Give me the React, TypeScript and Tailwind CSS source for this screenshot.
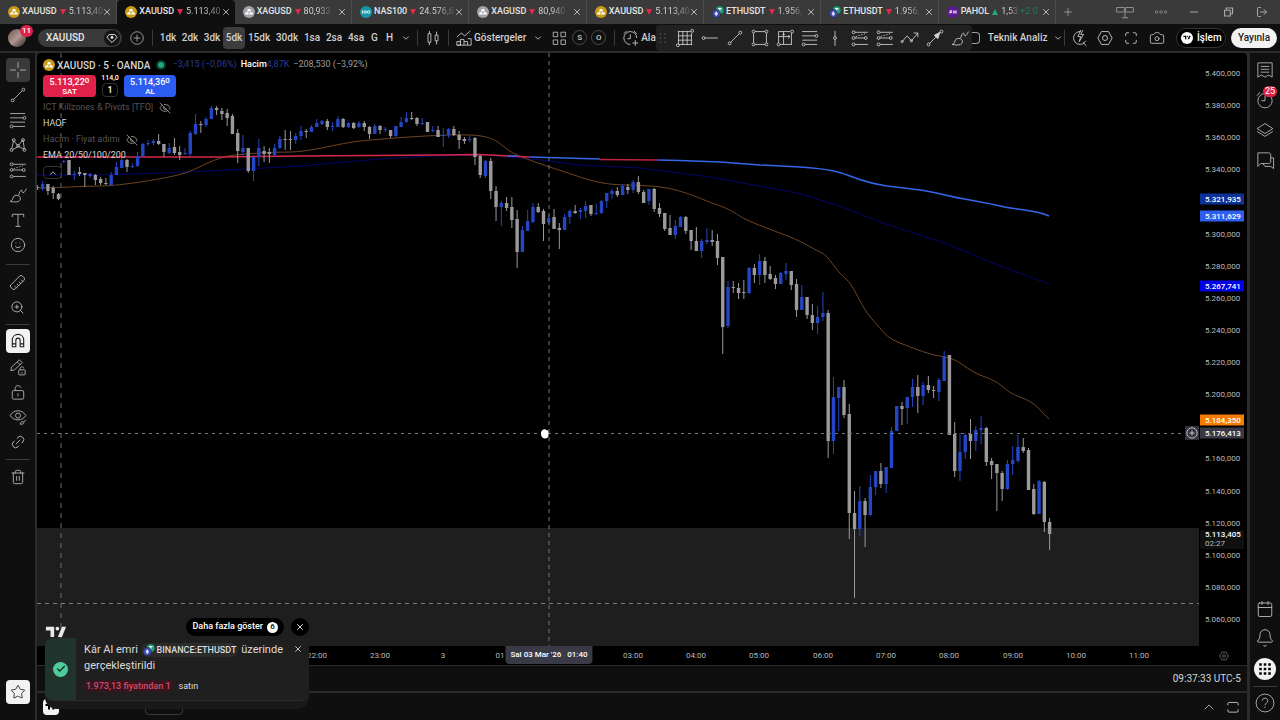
import React from "react";
import {
  Bell,
  Calendar,
  Camera,
  Check,
  ChevronDown,
  ChevronUp,
  EyeOff,
  Link2,
  LogOut,
  Maximize,
  Minus,
  Plus,
  Ruler,
  Smile,
  Star,
  Trash2,
  X,
  ZoomIn,
} from "lucide-react";

type Candle = [up: number, high: number, top: number, bottom: number, low: number];

// one entry per five minute bar, in canvas units
const candles: Candle[] = [
  [0, 185, 187, 188, 190], [1, 181, 184, 189, 191], [0, 184, 184, 191, 195], [0, 186, 188, 193, 199],
  [0, 193, 194, 199, 200], [1, 160, 161, 162, 163], [0, 160, 160, 175, 175], [1, 171, 174, 175, 180],
  [0, 167, 172, 174, 176], [0, 173, 173, 175, 187], [1, 173, 174, 176, 178], [0, 174, 175, 180, 185],
  [0, 177, 179, 183, 185], [0, 178, 183, 184, 185], [1, 172, 175, 185, 186], [1, 162, 167, 175, 175],
  [1, 158, 160, 168, 168], [0, 159, 160, 167, 172], [1, 163, 166, 167, 168], [1, 152, 156, 166, 167],
  [1, 143, 144, 156, 157], [1, 140, 143, 144, 146], [1, 139, 141, 143, 145], [0, 134, 141, 144, 145],
  [0, 144, 144, 152, 157], [1, 143, 148, 153, 154], [0, 138, 147, 153, 155], [0, 146, 152, 155, 160],
  [1, 148, 153, 154, 155], [1, 131, 133, 154, 156], [1, 114, 124, 134, 135], [0, 121, 124, 125, 133],
  [1, 117, 119, 125, 127], [1, 106, 108, 119, 119], [0, 106, 108, 110, 115], [0, 108, 111, 114, 120],
  [0, 109, 113, 118, 126], [0, 114, 116, 134, 134], [0, 129, 133, 151, 163], [1, 135, 148, 152, 156],
  [0, 148, 148, 171, 173], [1, 155, 157, 171, 181], [1, 139, 148, 157, 166], [0, 146, 151, 154, 162],
  [0, 148, 152, 154, 163], [1, 144, 148, 155, 156], [1, 136, 139, 148, 149], [0, 130, 139, 140, 150],
  [0, 131, 139, 140, 150], [1, 133, 136, 140, 144], [1, 126, 131, 136, 140], [0, 129, 131, 132, 138],
  [1, 125, 127, 132, 132], [1, 119, 123, 127, 127], [1, 120, 121, 124, 125], [0, 119, 121, 127, 130],
  [1, 122, 126, 127, 131], [1, 116, 119, 127, 127], [0, 118, 119, 127, 128], [1, 122, 123, 127, 128],
  [0, 122, 123, 128, 129], [1, 121, 123, 127, 128], [0, 121, 123, 127, 131], [0, 126, 127, 134, 139],
  [1, 124, 126, 134, 134], [0, 125, 126, 130, 134], [1, 127, 129, 130, 132], [0, 130, 130, 136, 138],
  [1, 126, 126, 136, 137], [1, 117, 122, 127, 127], [1, 112, 118, 122, 123], [0, 112, 118, 119, 120],
  [0, 117, 118, 124, 126], [1, 118, 123, 124, 125], [0, 122, 122, 132, 132], [1, 126, 130, 131, 132],
  [0, 126, 130, 137, 137], [1, 128, 135, 136, 147], [1, 128, 129, 135, 138], [0, 126, 129, 135, 136],
  [0, 131, 135, 140, 149], [0, 137, 139, 141, 144], [1, 136, 139, 140, 142], [0, 137, 138, 157, 165],
  [0, 155, 156, 175, 178], [1, 160, 161, 176, 178], [0, 158, 161, 191, 199], [0, 186, 191, 207, 221],
  [1, 201, 203, 207, 226], [0, 197, 203, 208, 211], [0, 197, 207, 220, 228], [0, 210, 219, 252, 268],
  [1, 226, 230, 252, 252], [1, 210, 221, 231, 231], [1, 203, 207, 222, 223], [0, 203, 207, 212, 213],
  [0, 209, 211, 224, 241], [1, 215, 218, 222, 225], [0, 209, 217, 229, 229], [0, 223, 228, 230, 249],
  [1, 214, 217, 230, 230], [1, 209, 211, 217, 224], [0, 205, 211, 213, 214], [1, 208, 210, 212, 219],
  [1, 201, 206, 211, 218], [0, 205, 205, 214, 216], [1, 204, 213, 214, 215], [1, 200, 201, 213, 214],
  [1, 193, 193, 201, 208], [1, 189, 191, 194, 199], [0, 187, 191, 195, 197], [1, 184, 186, 195, 195],
  [0, 184, 187, 190, 194], [1, 180, 182, 190, 193], [0, 176, 182, 192, 194], [0, 190, 192, 203, 203],
  [1, 189, 189, 201, 205], [0, 188, 189, 209, 212], [0, 203, 208, 214, 217], [0, 213, 213, 229, 231],
  [0, 215, 228, 235, 235], [1, 220, 226, 235, 239], [1, 216, 217, 227, 227], [0, 216, 217, 231, 234],
  [0, 230, 230, 241, 250], [0, 227, 241, 251, 251], [1, 239, 241, 251, 258], [1, 228, 240, 242, 244],
  [0, 230, 240, 242, 246], [0, 234, 241, 258, 265], [0, 257, 257, 327, 354], [1, 281, 287, 326, 328],
  [0, 281, 287, 288, 293], [0, 283, 288, 293, 299], [0, 280, 292, 293, 299], [1, 267, 268, 293, 294],
  [0, 264, 268, 275, 283], [1, 254, 261, 275, 285], [0, 257, 261, 275, 283], [0, 266, 274, 279, 280],
  [0, 275, 278, 284, 289], [1, 272, 273, 284, 284], [1, 263, 271, 274, 280], [0, 271, 271, 285, 290],
  [0, 279, 284, 310, 317], [1, 285, 297, 310, 310], [0, 297, 297, 315, 319], [0, 304, 315, 323, 330],
  [1, 306, 317, 323, 334], [1, 292, 313, 317, 321], [0, 310, 313, 441, 458], [1, 377, 397, 441, 454],
  [1, 387, 387, 398, 431], [0, 380, 387, 415, 418], [0, 404, 414, 513, 539], [0, 491, 513, 529, 598],
  [1, 486, 501, 529, 536], [0, 498, 501, 515, 547], [1, 475, 487, 515, 516], [1, 471, 471, 487, 495],
  [0, 463, 471, 484, 488], [1, 467, 467, 484, 493], [1, 427, 431, 468, 468], [1, 406, 406, 431, 431],
  [0, 402, 406, 409, 425], [1, 397, 397, 408, 424], [1, 379, 387, 397, 407], [0, 375, 387, 396, 413],
  [1, 382, 385, 396, 405], [0, 376, 385, 390, 393], [0, 386, 390, 391, 398], [1, 378, 380, 392, 401],
  [1, 351, 356, 381, 381], [0, 355, 355, 435, 435], [0, 422, 434, 471, 477], [1, 433, 452, 471, 481],
  [1, 433, 435, 452, 459], [0, 419, 434, 441, 459], [1, 426, 430, 441, 451], [1, 416, 428, 430, 444],
  [0, 427, 428, 462, 466], [0, 458, 461, 465, 479], [0, 464, 464, 473, 511], [0, 471, 473, 489, 501],
  [1, 460, 464, 489, 490], [1, 446, 460, 464, 475], [1, 435, 447, 461, 463], [0, 438, 447, 451, 453],
  [0, 448, 450, 490, 490], [0, 484, 489, 514, 515], [1, 480, 481, 514, 514], [0, 481, 482, 522, 532],
  [0, 518, 522, 534, 550],
];

const LAST_X = 1049.6;
const BAR_STEP = 5.272;

const priceTop = (price: number) => `${(((5400 - price) * 1.606 + 21) / 593) * 100}%`;
const timeLeft = (x: number) => `${((x - 37) / 1210) * 100}%`;

const prices = [
  { price: 5400, label: "5.400,000" },
  { price: 5380, label: "5.380,000" },
  { price: 5360, label: "5.360,000" },
  { price: 5340, label: "5.340,000" },
  { price: 5300, label: "5.300,000" },
  { price: 5280, label: "5.280,000" },
  { price: 5260, label: "5.260,000" },
  { price: 5240, label: "5.240,000" },
  { price: 5220, label: "5.220,000" },
  { price: 5200, label: "5.200,000" },
  { price: 5160, label: "5.160,000" },
  { price: 5140, label: "5.140,000" },
  { price: 5120, label: "5.120,000" },
  { price: 5100, label: "5.100,000" },
  { price: 5080, label: "5.080,000" },
  { price: 5060, label: "5.060,000" },
];

const priceTags = [
  { price: 5321.935, label: "5.321,935", style: "bg-[#0c3299]" },
  { price: 5311.629, label: "5.311,629", style: "bg-[#2f5ff0]" },
  { price: 5267.741, label: "5.267,741", style: "bg-[#0000e6]" },
  { price: 5184.35, label: "5.184,350", style: "bg-[#f57c00]" },
  { price: 5176.413, label: "5.176,413", style: "bg-[#3a3a46]" },
];

const times = [
  { x: 317, label: "22:00" },
  { x: 380, label: "23:00" },
  { x: 443, label: "3" },
  { x: 500, label: "01" },
  { x: 633, label: "03:00" },
  { x: 696, label: "04:00" },
  { x: 759, label: "05:00" },
  { x: 823, label: "06:00" },
  { x: 886, label: "07:00" },
  { x: 949, label: "08:00" },
  { x: 1013, label: "09:00" },
  { x: 1076, label: "10:00" },
  { x: 1139, label: "11:00" },
];

const tabs = [
  { coin: "gold", name: "XAUUSD", price: "5.113,40" },
  { coin: "gold", name: "XAUUSD", price: "5.113,40", active: true },
  { coin: "silver", name: "XAGUSD", price: "80,933" },
  { coin: "nas", name: "NAS100", price: "24.576,6" },
  { coin: "silver", name: "XAGUSD", price: "80,940" },
  { coin: "gold", name: "XAUUSD", price: "5.113,40" },
  { coin: "eth", name: "ETHUSDT", price: "1.956," },
  { coin: "eth", name: "ETHUSDT", price: "1.956," },
  { coin: "ph", name: "PAHOL", price: "1,53", change: "+2.0" },
];

const Coin = ({ kind }: { kind: string }) => {
  if (kind === "eth")
    return (
      <svg viewBox="0 0 14 14" className="size-3 shrink-0">
        <circle cx="9" cy="4.8" r="4.6" fill="#1ba27a" />
        <path d="M7 3h4M9 3v5" stroke="#fff" strokeWidth="1.3" />
        <circle cx="5" cy="9" r="4.8" fill="#3b4ba8" stroke="#222" strokeWidth=".6" />
        <path d="M5 5.8 7 9 5 12 3 9Z" fill="#dfe5ff" />
      </svg>
    );
  if (kind === "nas" || kind === "ph")
    return (
      <svg viewBox="0 0 14 14" className="size-3 shrink-0">
        <circle cx="7" cy="7" r="7" fill={kind === "nas" ? "#1596a8" : "#5b1a8c"} />
        {kind === "nas" ? (
          <g fill="none" stroke="#fff">
            <path d="M2.8 5v4" />
            <circle cx="6" cy="7" r="1.5" />
            <circle cx="10" cy="7" r="1.5" />
          </g>
        ) : (
          <path d="M3.5 9V5.5h2v2h-2M8 5v4M8 7h2.5M10.5 5v4" fill="none" stroke="#fff" />
        )}
      </svg>
    );
  return (
    <svg viewBox="0 0 14 14" className="size-3 shrink-0">
      <circle cx="7" cy="7" r="7" fill={kind === "gold" ? "#c99a15" : "#a3a3a8"} />
      <path d="M5.6 3.6h2.8l1 2.8H4.6ZM3.1 7.2h3l.8 2.8H2.2ZM7.9 7.2h3l.9 2.8H7.1Z" fill="#fff" />
    </svg>
  );
};

const Icon = ({ children, className = "size-5" }: { children: React.ReactNode; className?: string }) => (
  <svg viewBox="0 0 28 28" fill="none" stroke="currentColor" strokeWidth="1.2" className={`shrink-0 ${className}`}>
    {children}
  </svg>
);

const TrendLine = () => (
  <Icon>
    <path d="m8 20 12-12" />
    <circle cx="6.5" cy="21.5" r="2" />
    <circle cx="21.5" cy="6.5" r="2" />
  </Icon>
);

const Fib = () => (
  <Icon>
    <path d="M3 5h21M3 11h18M3 17h21M7 23h17" />
    <circle cx="23" cy="11" r="2" />
    <circle cx="5" cy="23" r="2" />
  </Icon>
);

const Position = () => (
  <Icon>
    <path d="M7 6h18M7 14h13M7 23h18" />
    <path d="m8 12 13-4" strokeDasharray="2 2" />
    <circle cx="5" cy="6" r="2" />
    <circle cx="5" cy="14" r="2" />
    <circle cx="22" cy="14" r="2" />
    <circle cx="5" cy="23" r="2" />
  </Icon>
);

const Brush = () => (
  <Icon>
    <path d="M3 23c4-1 3-4 5-7 2-2 6-2 8 0s2 5-1 7c-3 1-8 1-12 0ZM15 14c1-4 2-6 4-7 1 2 1 3 2 4 2 0 3-3 5-6" />
  </Icon>
);

const Logo = ({ className }: { className: string }) => (
  <svg viewBox="0 0 24 16" fill="currentColor" className={className}>
    <path d="M1 2h9v11H6V6H1Z" />
    <circle cx="13.5" cy="4" r="2" />
    <path d="M18.5 2H23l-4.500 11H14Z" />
  </svg>
);

const drawTools = [
  { label: "Trend çizgisi", icon: <TrendLine /> },
  { label: "Fibonacci", icon: <Fib /> },
  {
    label: "Formasyonlar",
    icon: (
      <Icon>
        <path d="M5 20 8 8l6 7 7-8 2 13-8-4-8 4" />
        <circle cx="5" cy="21" r="2" />
        <circle cx="8" cy="7" r="2" />
        <circle cx="14" cy="15" r="2" />
        <circle cx="21" cy="7" r="2" />
        <circle cx="23" cy="21" r="2" />
      </Icon>
    ),
  },
  { label: "Pozisyonlar", icon: <Position /> },
  { label: "Fırça", icon: <Brush /> },
  {
    label: "Metin",
    icon: (
      <Icon>
        <path d="M6 10V6h16v4M14 6v17M10.500 23h7" />
      </Icon>
    ),
  },
  { label: "Emoji", icon: <Smile className="size-4" strokeWidth={1.3} /> },
];

const editTools = [
  {
    label: "Çizimde kal",
    icon: (
      <Icon>
        <path d="m4 19 1-5L16 4l4 4L9 18ZM13 7l4 4" />
        <rect x="15" y="18" width="9" height="7" rx="1" />
        <path d="M17 18v-2c0-3 5-3 5 0M19.500 21v2" />
      </Icon>
    ),
  },
  {
    label: "Kilitle",
    icon: (
      <Icon>
        <rect x="6" y="12" width="16" height="12" rx="2" />
        <path d="M10 12V9c0-5 7-5 8-1M14 16v4" />
      </Icon>
    ),
  },
  {
    label: "Gizle",
    icon: (
      <Icon>
        <path d="M3 12c5-9 17-9 22 0-5 8-17 8-22 0ZM17 24c1-4 4-4 5-3s-1 4-5 3ZM22 21l3-3" />
        <circle cx="14" cy="12" r="3.500" />
      </Icon>
    ),
  },
  { label: "Bağla", icon: <Link2 className="size-4 -rotate-45" strokeWidth={1.3} /> },
];

const favourites = [
  {
    label: "Izgara",
    icon: (
      <Icon>
        <path d="M4 5h18M4 11h20M4 17h20M5 23h19M5 4v18M11 4v20M17 4v20M23 7v17" />
        <circle cx="24" cy="4" r="2" />
        <circle cx="4" cy="24" r="2" />
      </Icon>
    ),
  },
  {
    label: "Yatay ışın",
    icon: (
      <Icon>
        <path d="M7 14h18" />
        <circle cx="5" cy="14" r="2" />
      </Icon>
    ),
  },
  { label: "Trend", icon: <TrendLine /> },
  {
    label: "Dikdörtgen",
    icon: (
      <Icon>
        <path d="M7 5h14M7 23h14M5 7v14M23 7v14" />
        <circle cx="5" cy="5" r="2" />
        <circle cx="23" cy="5" r="2" />
        <circle cx="5" cy="23" r="2" />
        <circle cx="23" cy="23" r="2" />
      </Icon>
    ),
  },
  {
    label: "Fiyat ve tarih",
    icon: (
      <Icon>
        <path d="M5 5h16M5 5v16M7 23h17M23 7v16M12 5v18M5 12h16M12 8l-2 2M12 8l2 2M18 10l3 2-3 3" />
        <circle cx="24" cy="5" r="2" />
        <circle cx="5" cy="23" r="2" />
      </Icon>
    ),
  },
  { label: "Seviyeler", icon: <Fib /> },
  {
    label: "Dikey",
    icon: (
      <Icon>
        <path d="M14 4v8M14 16v9" />
        <circle cx="14" cy="14" r="2" />
      </Icon>
    ),
  },
  { label: "Uzun pozisyon", icon: <Position /> },
  { label: "Kısa pozisyon", icon: <Position /> },
  {
    label: "Yol",
    icon: (
      <Icon>
        <path d="m3 19 7-8 6 7 9-11M19 7h6v6" />
        <circle cx="3" cy="19" r="1.500" />
        <circle cx="16" cy="18" r="1.500" />
      </Icon>
    ),
  },
  {
    label: "Ok",
    icon: (
      <Icon>
        <path d="m6 22 12-12" />
        <path d="m13 10 8-4-3 9Z" fill="currentColor" />
        <circle cx="5" cy="23" r="2" />
        <circle cx="23" cy="5" r="2" />
      </Icon>
    ),
  },
  { label: "Fırça", icon: <Brush /> },
];

const intervals = ["1dk", "2dk", "3dk", "5dk", "15dk", "30dk", "1sa", "2sa", "4sa", "G", "H"];

const Hexagon = ({ className }: { className?: string }) => (
  <Icon className={className}>
    <path d="M9 5h10l5 9-5 9H9l-5-9Z" />
    <circle cx="14" cy="14" r="3.500" />
  </Icon>
);

const Separator = () => <div className="h-4 w-px shrink-0 bg-[#3a3a3a]" />;

const TabBar = () => (
  <nav className="flex h-6 items-stretch bg-[#3a3a3a]">
    <div className="grid w-[82.5%] grid-cols-9">
      {tabs.map(({ coin, name, price, active, change }, i) => (
        <div
          key={i}
          className={`flex min-w-0 items-center pl-2 pr-1 text-[9px] ${active ? "rounded-t bg-[#0f0f0f]" : "border-r border-[#4c4c4c]"}`}
        >
          <a href="#" className="flex min-w-0 flex-1 items-center gap-0.5">
            <Coin kind={coin} />
            <span className="font-medium text-[#e4e4e4]">{name}</span>
            <svg viewBox="0 0 8 8" className={`mx-px size-1.5 shrink-0 ${change ? "text-[#22ab83]" : "text-[#e0284a]"}`}>
              <path d={change ? "M4 0 8 8H0Z" : "M0 0h8L4 8Z"} fill="currentColor" />
            </svg>
            <span className="whitespace-nowrap bg-linear-to-r from-[#dcdcdc] from-50% to-[#555] bg-clip-text text-transparent">
              {price}
            </span>
            {change && <span className="text-[#22735d]">{change}</span>}
          </a>
          <button aria-label="Sekmeyi kapat">
            <X className="size-[10px] text-[#d0d0d0]" />
          </button>
        </div>
      ))}
    </div>
    <div className="flex flex-1 items-center text-[#a8a8a8]">
      <button aria-label="Yeni sekme" className="pl-1.5">
        <Plus className="size-3" strokeWidth={1.5} />
      </button>
      <div className="ml-auto flex items-center gap-5 pr-3">
        <Icon className="size-[18px]">
          <path d="M1 7h12v7H1ZM15 7h12v7H15ZM14 14v9M9 23h10" />
        </Icon>
        <Icon className="size-3.5">
          <circle cx="5" cy="14" r="2.500" />
          <circle cx="14" cy="14" r="2.500" />
          <circle cx="23" cy="14" r="2.500" />
        </Icon>
        <Minus className="size-3" />
        <Icon className="size-4">
          <path d="M8 11h10v10H8ZM11 11V7h11v10h-4" strokeWidth="2" />
        </Icon>
        <LogOut className="size-3" />
      </div>
    </div>
  </nav>
);

const TopToolbar = () => (
  <header className="flex h-[27px] items-center text-[10px] font-medium text-[#d0d0d0]">
    <div className="relative ml-2 size-[18px] shrink-0 rounded-full bg-linear-to-br from-[#6b5550] via-[#b19791] to-[#332725]">
      <span className="absolute -top-1 left-3 flex h-3 min-w-3 items-center justify-center rounded-full bg-[#dc2348] px-0.5 text-[8px] text-white">
        11
      </span>
    </div>
    <button className="ml-3 flex h-[18px] w-[84px] shrink-0 items-center justify-between rounded-full bg-[#3a3a3a] pl-2 pr-0.5 text-[#ebebeb]">
      XAUUSD
      <span className="rounded-full bg-[#141414]">
        <Icon className="size-4">
          <path d="M9 8h10l4 5-9 9-9-9Z" strokeWidth="1.600" />
          <circle cx="14" cy="13" r="2" fill="currentColor" />
        </Icon>
      </span>
    </button>
    <button aria-label="Sembol ekle" className="mx-[7px]">
      <Icon className="size-4">
        <circle cx="14" cy="14" r="11" />
        <path d="M14 8v12M8 14h12" />
      </Icon>
    </button>
    <Separator />
    <div className="ml-1 flex shrink-0 items-center">
      {intervals.map((label) => (
        <button
          key={label}
          className={`h-[22px] rounded ${label.length > 3 ? "w-[28px]" : label.length > 1 ? "w-[22px]" : "w-[15px]"} ${label === "5dk" ? "bg-[#3d3d3d]" : ""}`}
        >
          {label}
        </button>
      ))}
      <ChevronDown className="ml-1 mr-1.5 size-2.5" />
    </div>
    <Separator />
    <button aria-label="Mum grafiği" className="mx-[5px]">
      <Icon>
        <path d="M7 8h4v12H7ZM9 4v4M9 20v4M17 10h4v8h-4ZM19 5v5M19 18v5" />
      </Icon>
    </button>
    <Separator />
    <button className="ml-[5px] flex shrink-0 items-center">
      <Icon>
        <path d="M4 24v-5h5v5ZM9 24v-8h5v8M14 19h5v5M19 15h5v9H4M4 13l6-6 5 4 8-7" />
      </Icon>
      Göstergeler
    </button>
    <ChevronDown className="mx-[7px] size-2.5 shrink-0" />
    <div className="flex shrink-0 items-center gap-1">
      <Icon className="size-[18px]">
        <path d="M5 5h7v7H5ZM17 5h7v7h-7ZM5 17h7v7H5ZM17 17h7v7h-7Z" />
      </Icon>
      <button className="size-[15px] rounded-full border border-[#4a4a4a] text-[8px] leading-3">S</button>
      <button className="size-[15px] rounded-full border border-[#4a4a4a] text-[8px] leading-3">O</button>
    </div>
    <div className="ml-2 flex shrink-0 items-center">
      <Separator />
      <button className="ml-1.5 flex items-center">
        <Icon>
          <path d="M22 14a9 9 0 1 0-9 9M13 9v6H9M4 8l4-4M18 4l4 4M20 17v8M16 21h8" />
        </Icon>
        Ala
      </button>
    </div>
    <div className="flex h-[26px] shrink-0 items-center gap-[5px] rounded bg-[#212121] pr-0.5">
      <Icon className="size-3.5">
        <path d="M9 5v3M9 13v3M9 21v3M18 5v3M18 13v3M18 21v3" strokeWidth="2.500" stroke="#555" />
      </Icon>
      {favourites.map(({ label, icon }) => (
        <button key={label} aria-label={label}>
          {icon}
        </button>
      ))}
    </div>
    <div className="flex flex-1 items-center">
      <div className="mr-2 h-3 w-2 shrink-0 rounded-r-sm border border-l-0 border-[#a0a0a0]" />
      <button className="flex items-center gap-1.5 whitespace-nowrap">
        Teknik Analiz
        <ChevronDown className="size-2.5" />
      </button>
    </div>
    <div className="flex shrink-0 items-center gap-[5px] pr-[3px]">
      <Separator />
      <Icon>
        <path d="M15 5a9 9 0 1 0 7 13M18 20l5 5M15 3l-4 9h4l-2 7 6-10h-4l3-6" />
      </Icon>
      <Hexagon />
      <Maximize className="mx-1 size-3.5" strokeWidth={1.4} />
      <Camera className="mx-0.5 size-4" strokeWidth={1.2} />
      <button className="ml-1 flex h-5 w-[50px] items-center gap-1 rounded-full border border-[#333] bg-black pl-1 text-white">
        <span className="flex size-3 shrink-0 items-center justify-center rounded-full bg-white text-black">
          <Logo className="w-2" />
        </span>
        İşlem
      </button>
      <button className="h-5 w-[46px] rounded-full bg-[#f2f2f2] text-[#1c1c1c]">Yayınla</button>
    </div>
  </header>
);

const LeftToolbar = () => (
  <aside className="flex w-[35px] shrink-0 flex-col items-center gap-px bg-[#0f0f0f] pb-4 pt-[5px] text-[#bcbcbc]">
    <button aria-label="İmleç" className="flex size-6 items-center justify-center rounded bg-[#3a3a3a]">
      <Icon>
        <path d="M14 3v8M14 17v8M3 14h8M17 14h8" />
      </Icon>
    </button>
    {drawTools.map(({ label, icon }) => (
      <button key={label} aria-label={label} className="flex size-6 items-center justify-center">
        {icon}
      </button>
    ))}
    <div className="mb-1 mt-1.5 h-px w-6 bg-[#3a3a3a]" />
    <button aria-label="Ölçü" className="flex size-6 items-center justify-center">
      <Ruler className="size-[17px] rotate-90" strokeWidth={1.3} />
    </button>
    <button aria-label="Yakınlaştır" className="flex size-6 items-center justify-center">
      <ZoomIn className="size-[15px]" strokeWidth={1.4} />
    </button>
    <div className="mb-0.5 mt-1 h-px w-6 bg-[#3a3a3a]" />
    <button aria-label="Mıknatıs" className="my-px flex size-6 items-center justify-center rounded bg-[#f2f2f2] text-[#1c1c1c]">
      <Icon>
        <path d="M6 22v-9c0-11 16-11 16 0v9h-5v-9c0-4-6-4-6 0v9ZM6 18h5M17 18h5" strokeWidth="1.500" />
      </Icon>
    </button>
    {editTools.map(({ label, icon }) => (
      <button key={label} aria-label={label} className="flex size-6 items-center justify-center">
        {icon}
      </button>
    ))}
    <div className="my-1 h-px w-6 bg-[#3a3a3a]" />
    <button aria-label="Sil" className="flex size-6 items-center justify-center">
      <Trash2 className="size-4" strokeWidth={1.3} />
    </button>
    <button aria-label="Favoriler" className="mt-auto flex size-6 items-center justify-center rounded bg-[#f2f2f2] text-[#1c1c1c]">
      <Star className="size-4" strokeWidth={1.25} />
    </button>
  </aside>
);

const RightToolbar = () => (
  <aside className="flex w-[30px] shrink-0 flex-col items-center gap-2.5 bg-[#0f0f0f] pb-[7px] pt-[7px] text-[#bcbcbc]">
    <button aria-label="İzleme listesi">
      <Icon>
        <path d="M4 4h20v20l-5-3-5 3-5-3-5 3ZM8 9h12M8 13h12M8 17h12" />
      </Icon>
    </button>
    <button aria-label="Alarmlar" className="relative">
      <Icon>
        <circle cx="14" cy="15" r="10" />
        <path d="M14 8v7H9M3 8l4-5" />
      </Icon>
      <span className="absolute -top-1 left-2 rounded-full bg-[#dc2348] px-0.5 text-[9px] leading-[11px] text-white">25</span>
    </button>
    <button aria-label="Katmanlar">
      <Icon>
        <path d="m14 5 11 7-11 7-11-7ZM3 16l11 7 11-7" />
      </Icon>
    </button>
    <button aria-label="Sohbet">
      <Icon>
        <path d="M4 4h15c2 0 3 1 3 3v10c0 1-1 2-3 2H8l-4 4ZM22 11h4v15l-4-3h-8l-3-4" />
      </Icon>
    </button>
    <button aria-label="Takvim" className="mt-auto">
      <Calendar className="size-[18px]" strokeWidth={1.2} />
    </button>
    <button aria-label="Bildirimler">
      <Bell className="size-5" strokeWidth={1.1} />
    </button>
    <button aria-label="Uygulamalar" className="rounded-full bg-[#f2f2f2] p-0.5 text-black">
      <Icon className="size-[18px]">
        <path d="M5 7h4M12 7h4M19 7h4M5 14h4M12 14h4M19 14h4M5 21h4M12 21h4M19 21h4" strokeWidth="4" />
      </Icon>
    </button>
    <div className="-my-1 h-px w-6 bg-[#3a3a3a]" />
    <button aria-label="Yardım">
      <Icon>
        <circle cx="14" cy="14" r="12.500" />
        <path d="M10 11c0-5 8-5 8 0 0 3-4 3-4 6M14 19v2" />
      </Icon>
    </button>
  </aside>
);

const Plot = () => (
  <svg viewBox="37 53 1162 593" preserveAspectRatio="none" className="absolute inset-0 h-full w-full" fill="none">
    <rect x="37" y="528" width="1162" height="118" fill="#1e1e1e" />
    <path d="M37 603.500H1199" stroke="#808080" strokeDasharray="4 4" />
    <path d="M61 53V646" stroke="#6a6a78" strokeDasharray="5 5" />
    <path
      d="M37 175 100 175 190 172 300 166 380 159 430 156 490 155 540 160 580 165 640 168 710 177 797 193 843 207 880 222 950 245 1000 266 1049 284"
      stroke="#05056c"
    />
    <path
      d="M37 188C60 188 80 186 100 186S170 178 185 173 215 157 235 155 270 152 290 152 340 143 360 141 440 134 470 135 500 147 515 154 550 167 580 177 620 184 650 186 695 197 715 204 735 214 745 219 775 231 790 237 815 250 822 253 835 270 845 278 860 306 872 319 885 337 900 343 930 355 945 357 965 370 985 377 1003 391 1020 397 1040 411 1049 419"
      stroke="#6e4422"
    />
    <path d="M37 157 220 157 300 156 440 155 480 154.500 510 156 530 157" stroke="#d62849" strokeWidth="1.500" />
    <path
      d="M508 156 517 156M530 157 600 159M658 160 680 160.500 720 162 760 165 800 167C830 169 840 172 850 176S875 185 895 187 930 191 945 195 985 202 1000 206 1035 209 1049 216"
      stroke="#3566e8"
      strokeWidth="1.500"
    />
    <path d="M600 159.500 658 160" stroke="#c02340" strokeWidth="1.500" />
    {candles.map(([up, high, top, bottom, low], i) => {
      const x = LAST_X - (candles.length - 1 - i) * BAR_STEP;
      const color = up ? "#2446c4" : "#9a9a9a";
      return (
        <g key={i} fill={color}>
          <rect x={x - 0.5} y={high} width="1" height={low - high} />
          <rect x={x - 1.7} y={top} width="3.4" height={Math.max(bottom - top, 1)} />
        </g>
      );
    })}
    <path d="M37 433.500H1199" stroke="#777" strokeDasharray="3 4" />
    <path d="M549 53V646" stroke="#777" strokeDasharray="4 4" />
    <path d="M541 433c0-2 1-2 1.500-3 1-1 3-1 4 0 1.500 0 2 1 2 3v2c0 2-1 3.500-3.500 3.500s-3-1.500-4-3.500Z" fill="#fff" />
  </svg>
);

const Legend = () => (
  <div className="absolute left-1.5 top-[5px] flex flex-col items-start text-[9px] text-[#d6d6d6]">
    <div className="flex h-[14px] items-center whitespace-nowrap">
      <Coin kind="gold" />
      <span className="ml-0.5 text-[10px] font-medium">XAUUSD · 5 · OANDA</span>
      <span className="mx-1.5 flex size-2.5 items-center justify-center rounded-full bg-[#0b3a2c]">
        <span className="size-1.5 rounded-full bg-[#20a87c]" />
      </span>
      <span className="text-[#2a3a92]">−3,415 (−0,06%)</span>
      <span className="ml-1 font-medium text-white">Hacim</span>
      <span className="mr-1 text-[#2a3a92]">4,87K</span>
      <span className="text-[#9c9c9c]">−208,530 (−3,92%)</span>
    </div>
    <div className="mt-[3px] flex h-[22px] gap-1.5 text-center font-medium text-white">
      <button className="w-[53px] rounded bg-[#e0224a] leading-[10px]">
        5.113,22<span className="align-top text-[8px] leading-[8px]">0</span>
        <span className="block text-[8px] leading-[9px]">SAT</span>
      </button>
      <div className="flex w-4 flex-col items-center">
        <span className="text-[7px] leading-[7px]">114,0</span>
        <input
          aria-label="Miktar"
          defaultValue="1"
          className="mt-px h-[14px] w-4 rounded border border-[#333] bg-transparent text-center text-[9px]"
        />
      </div>
      <button className="w-[52px] rounded bg-[#2d5cf2] leading-[10px]">
        5.114,36<span className="align-top text-[8px] leading-[8px]">0</span>
        <span className="block text-[8px] leading-[9px]">AL</span>
      </button>
    </div>
    <div className="mt-[3px] flex h-4 items-center gap-1.5 text-[#555]">
      ICT Killzones &amp; Pivots [TFO]
      <EyeOff className="size-3 text-[#b0b0b0]" strokeWidth={1.5} />
    </div>
    <div className="flex h-4 items-center">HAOF</div>
    <div className="flex h-4 items-center gap-1.5 text-[#555]">
      Hacim · Fiyat adımı
      <EyeOff className="size-3 text-[#b0b0b0]" strokeWidth={1.5} />
    </div>
    <div className="flex h-4 items-center">EMA 20/50/100/200</div>
    <button aria-label="Göstergeleri daralt" className="mt-0.5 flex h-[13px] w-[19px] items-center justify-center rounded-sm border border-[#333]">
      <ChevronUp className="size-2.5" />
    </button>
  </div>
);

const PriceAxis = () => (
  <div className="relative w-12 shrink-0 text-[8px] text-[#bababa]">
    {prices.map(({ price, label }) => (
      <span key={price} className="absolute left-1.5 -translate-y-1/2 leading-3" style={{ top: priceTop(price) }}>
        {label}
      </span>
    ))}
    {priceTags.map(({ price, label, style }) => (
      <span
        key={label}
        className={`absolute left-px w-11 -translate-y-1/2 pl-[5px] font-medium leading-[11px] text-white ${style}`}
        style={{ top: priceTop(price) }}
      >
        {label}
      </span>
    ))}
    <div className="absolute left-px w-11 bg-[#0f0f0f] pb-px pl-[5px] leading-[9px]" style={{ top: priceTop(5116) }}>
      <p className="font-medium text-white">5.113,405</p>
      <p>02:27</p>
    </div>
    <button
      aria-label="Alarm ekle"
      className="absolute right-full flex size-3.5 -translate-y-1/2 items-center justify-center bg-[#33333d] text-[#d6d6d6]"
      style={{ top: priceTop(5176.413) }}
    >
      <Icon className="size-3">
        <circle cx="14" cy="14" r="12" strokeWidth="2" />
        <path d="M14 8v12M8 14h12" strokeWidth="2" />
      </Icon>
    </button>
  </div>
);

const TimeAxis = () => (
  <div className="relative h-[19px] shrink-0 bg-black text-[8px] leading-[19px] text-[#bababa]">
    {times.map(({ x, label }) => (
      <span key={x} className="absolute -translate-x-1/2" style={{ left: timeLeft(x) }}>
        {label}
      </span>
    ))}
    <span
      className="absolute top-0 -translate-x-1/2 whitespace-pre rounded-b-sm bg-[#3a3a46] px-[5px] font-medium leading-[18px] text-white"
      style={{ left: timeLeft(549) }}
    >
      {"Sal 03 Mar '26   01:40"}
    </span>
    <button aria-label="Ölçek ayarları" className="absolute right-[17px] top-1 text-[#b0b0b0]">
      <Hexagon className="size-3" />
    </button>
  </div>
);

const Toast = () => (
  <div className="absolute bottom-[11px] left-2 w-[264px]">
    <div className="mb-0.5 flex items-center justify-end gap-[7px] text-[9px] font-medium text-white">
      <button className="flex h-[18px] items-center gap-1 rounded-full bg-black px-1.5">
        Daha fazla göster
        <span className="flex size-[11px] items-center justify-center rounded-full bg-white text-[8px] leading-none text-black">6</span>
      </button>
      <button aria-label="Tümünü kapat" className="flex size-[18px] items-center justify-center rounded-full bg-black">
        <X className="size-2.5" />
      </button>
    </div>
    <div className="rounded-xl bg-[#191919] pb-2">
      <div className="flex overflow-hidden rounded-lg border-b border-[#2b2b2b] bg-[#1f1f1f] text-[11px] text-[#dcdcdc]">
        <div className="flex w-[31px] shrink-0 items-center justify-center bg-[#20332d]">
          <span className="flex size-[15px] items-center justify-center rounded-full bg-[#4fcb9c] text-[#12261f]">
            <Check className="size-2.5" strokeWidth={3} />
          </span>
        </div>
        <div className="flex-1 pb-1.5 pl-2 pt-1">
          <p className="leading-4">
            Kâr Al emri{" "}
            <span className="inline-flex h-3.5 items-center gap-0.5 rounded-full bg-[#2b2b2b] px-0.5 align-middle text-[9px] font-medium">
              <Coin kind="eth" />
              BINANCE:ETHUSDT
            </span>{" "}
            üzerinde gerçekleştirildi
          </p>
          <p className="mt-1 text-[9px] leading-4">
            <span className="mr-1.5 rounded bg-[#35161f] px-0.5 py-px font-medium text-[#d64a68]">1.973,13 fiyatından 1</span>
            satın
          </p>
        </div>
        <button aria-label="Kapat" className="mr-1.5 mt-1.5 self-start">
          <X className="size-2.5" />
        </button>
      </div>
    </div>
  </div>
);

export default function App() {
  return (
    <div className="flex h-screen min-h-[600px] flex-col overflow-hidden bg-[#0f0f0f] font-['Roboto','Noto_Sans',sans-serif]">
      <TabBar />
      <TopToolbar />
      <div className="flex min-h-0 flex-1 border-t-2 border-[#2b2b2b] bg-[#2b2b2b]">
        <LeftToolbar />
        <main className="relative ml-0.5 mr-[3px] flex min-w-0 flex-1 flex-col">
          <section className="flex min-h-0 flex-1 overflow-hidden rounded-t bg-black">
            <div className="relative min-w-0 flex-1">
              <Plot />
              <Legend />
              <Logo className="absolute bottom-1.5 left-2 w-[22px] text-[#e8e8e8]" />
            </div>
            <PriceAxis />
          </section>
          <TimeAxis />
          <div className="flex h-[26px] shrink-0 items-center justify-end border-t border-[#2b2b2b] bg-[#0f0f0f] pr-1.5 text-[10px] text-[#d6d6d6]">
            09:37:33 UTC-5
          </div>
          <footer className="mt-0.5 flex h-[27px] shrink-0 items-center bg-[#0f0f0f] px-1.5 text-[#c4c4c4]">
            <span className="flex size-4 items-center justify-center rounded bg-[#f2f2f2] text-black">
              <Logo className="w-3" />
            </span>
            <div className="ml-[86px] h-4 w-[38px] rounded border border-[#3a3a3a]" />
            <button aria-label="Paneli aç" className="ml-auto mr-2">
              <ChevronUp className="size-4" strokeWidth={1.25} />
            </button>
            <button aria-label="Paneli büyüt">
              <Icon className="size-4">
                <path d="M5 11V8c0-1 1-2 2-2h14c1 0 2 1 2 2v3M5 18v3c0 1 1 2 2 2h14c1 0 2-1 2-2v-3" strokeWidth="1.600" />
              </Icon>
            </button>
          </footer>
          <Toast />
        </main>
        <RightToolbar />
      </div>
    </div>
  );
}
